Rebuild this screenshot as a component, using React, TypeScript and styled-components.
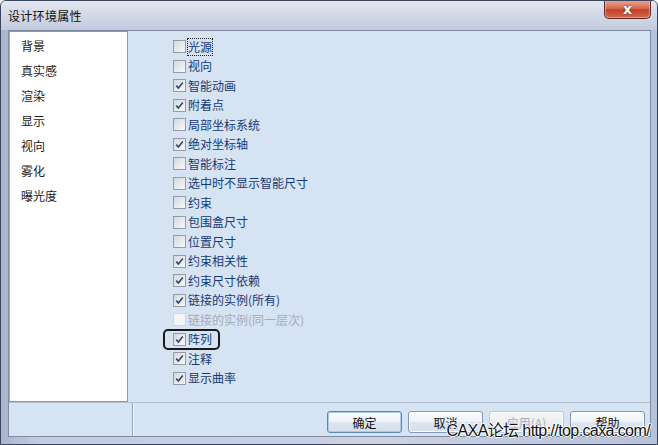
import styled, { createGlobalStyle } from "styled-components";

const GlobalStyle = createGlobalStyle`
  html, body {
    margin: 0;
    padding: 0;
    background: #ffffff;
  }
  body {
    font-family: "Noto Sans CJK SC", "DejaVu Sans", sans-serif;
    font-size: 12px;
  }
`;

const categories = ["背景", "真实感", "渲染", "显示", "视向", "雾化", "曝光度"];

type Option = {
  label: string;
  checked?: boolean;
  disabled?: boolean;
  focused?: boolean;
  marked?: boolean;
};

const options: Option[] = [
  { label: "光源", focused: true },
  { label: "视向" },
  { label: "智能动画", checked: true },
  { label: "附着点", checked: true },
  { label: "局部坐标系统" },
  { label: "绝对坐标轴", checked: true },
  { label: "智能标注" },
  { label: "选中时不显示智能尺寸" },
  { label: "约束" },
  { label: "包围盒尺寸" },
  { label: "位置尺寸" },
  { label: "约束相关性", checked: true },
  { label: "约束尺寸依赖", checked: true },
  { label: "链接的实例(所有)", checked: true },
  { label: "链接的实例(同一层次)", disabled: true },
  { label: "阵列", checked: true, marked: true },
  { label: "注释", checked: true },
  { label: "显示曲率", checked: true },
];

const Window = styled.div`
  position: relative;
  width: 658px;
  height: 445px;
  box-sizing: border-box;
  display: flex;
  flex-direction: column;
  border: 1px solid #3a4660;
  border-radius: 6px 6px 0 0;
  background: linear-gradient(90deg, #aab5cd 0%, #c4cde0 6%, #c9d1e2 60%, #b7c1d8 100%);
  overflow: hidden;
`;

const TitleBar = styled.div`
  height: 29px;
  flex: none;
  display: flex;
  justify-content: space-between;
  align-items: flex-start;
  background: linear-gradient(180deg, #e4e8f0 0%, #d3d9e6 45%, #c3cbdd 100%);
`;

const Title = styled.div`
  padding: 6px 0 0 7px;
  font-size: 12px;
  color: #101010;
  letter-spacing: 0.3px;
`;

const CloseButton = styled.div`
  width: 45px;
  height: 18px;
  margin-right: 6px;
  margin-top: -1px;
  display: flex;
  align-items: center;
  justify-content: center;
  border: 1px solid #5a2a24;
  border-top: none;
  border-radius: 0 0 5px 5px;
  background: linear-gradient(180deg, #e9a996 0%, #d76c52 45%, #c1412a 55%, #cf6a4c 100%);
  box-shadow: inset 0 0 0 1px rgba(255, 220, 200, 0.45);
  color: #ffffff;
  font-family: "DejaVu Sans", sans-serif;
  font-weight: bold;
  font-size: 14px;
  text-shadow: 0 0 2px #6b1d10;
`;

const Client = styled.div`
  flex: 1;
  margin: 0 6px 7px 7px;
  display: flex;
  flex-direction: column;
  border: 1px solid #7f8ca6;
  background: #d6e3f3;
`;

const Main = styled.div`
  height: 371px;
  display: flex;
`;

const CategoryList = styled.ul`
  width: 119px;
  box-sizing: border-box;
  margin: 0;
  padding: 1px 0 0 11px;
  list-style: none;
  background: #ffffff;
  border: 1px solid #8d98aa;
  border-left-color: #a6b0bf;
`;

const Category = styled.li`
  height: 25px;
  line-height: 25px;
  color: #1c1c1c;
  font-size: 12px;
`;

const OptionPane = styled.div`
  flex: 1;
  padding: 6px 0 0 45px;
`;

const Row = styled.div<{ $disabled?: boolean; $marked?: boolean }>`
  position: relative;
  height: 19.5px;
  display: flex;
  align-items: center;
  width: max-content;
  color: ${(p) => (p.$disabled ? "#a3acba" : "#163a72")};
  font-size: 12px;

  &::after {
    content: "";
    display: ${(p) => (p.$marked ? "block" : "none")};
    position: absolute;
    top: -1px;
    bottom: -1px;
    left: -10px;
    right: -8px;
    border: 2px solid #1a1a1a;
    border-radius: 5px;
  }
`;

const Box = styled.span<{ $disabled?: boolean }>`
  width: 11px;
  height: 11px;
  margin-right: 2px;
  flex: none;
  display: flex;
  align-items: center;
  justify-content: center;
  border: 1px solid ${(p) => (p.$disabled ? "#d2d6dc" : "#969ca6")};
  background: ${(p) =>
    p.$disabled
      ? "#f2f4f6"
      : "linear-gradient(135deg, #d3d7dd 0%, #e9ecef 60%, #f8f8f8 100%)"};
`;

const Label = styled.span<{ $focused?: boolean }>`
  outline: ${(p) => (p.$focused ? "1px dotted #222" : "none")};
  line-height: 16px;
`;

const Footer = styled.div`
  flex: 1;
  display: flex;
  border-top: 1px solid #b2bfd1;
`;

const FooterSpacer = styled.div`
  width: 123px;
  border-right: 1px solid #97a4b8;
  box-shadow: 1px 0 0 #f4f7fb;
`;

const ButtonBar = styled.div`
  flex: 1;
  display: flex;
  justify-content: flex-end;
  gap: 6px;
  padding: 8px 5px 0 0;
`;

const Button = styled.div<{ $default?: boolean; $disabled?: boolean }>`
  width: 75px;
  height: 22px;
  box-sizing: border-box;
  display: flex;
  align-items: center;
  justify-content: center;
  border: 1px solid ${(p) => (p.$default ? "#5e86b8" : p.$disabled ? "#c3c9d2" : "#8797b0")};
  border-radius: 3px;
  background: ${(p) =>
    p.$disabled
      ? "linear-gradient(180deg, #f6f7f8 0%, #eceef0 50%, #e2e5e8 100%)"
      : "linear-gradient(180deg, #fbfcfe 0%, #eef2f8 48%, #dde5f0 52%, #d4deec 100%)"};
  box-shadow: ${(p) => (p.$default ? "inset 0 0 0 1px #a9cbed" : "inset 0 0 0 1px #fbfdff")};
  color: ${(p) => (p.$disabled ? "#a7adb6" : "#111")};
  font-size: 12px;
`;

const Watermark = styled.div`
  position: absolute;
  right: 7px;
  bottom: 3px;
  font-family: "Liberation Sans", "Noto Sans CJK SC", sans-serif;
  font-size: 16px;
  letter-spacing: -0.6px;
  color: #111;
  text-shadow: 1px 0 0 #fff, -1px 0 0 #fff, 0 1px 0 #fff, 0 -1px 0 #fff;
  white-space: nowrap;
`;

const CheckMark = () => (
  <svg width="9" height="9" viewBox="0 0 9 9">
    <path d="M1.2 4.6 L3.4 7 L7.8 1.6" fill="none" stroke="#34466f" strokeWidth="1.6" />
  </svg>
);

export default function App() {
  return (
    <>
      <GlobalStyle />
      <Window>
        <TitleBar>
          <Title>设计环境属性</Title>
          <CloseButton>x</CloseButton>
        </TitleBar>
        <Client>
          <Main>
            <CategoryList>
              {categories.map((c) => (
                <Category key={c}>{c}</Category>
              ))}
            </CategoryList>
            <OptionPane>
              {options.map((o) => (
                <Row key={o.label} $disabled={o.disabled} $marked={o.marked}>
                  <Box $disabled={o.disabled}>{o.checked && <CheckMark />}</Box>
                  <Label $focused={o.focused}>{o.label}</Label>
                </Row>
              ))}
            </OptionPane>
          </Main>
          <Footer>
            <FooterSpacer />
            <ButtonBar>
              <Button $default>确定</Button>
              <Button>取消</Button>
              <Button $disabled>应用(A)</Button>
              <Button>帮助</Button>
            </ButtonBar>
          </Footer>
        </Client>
        <Watermark>CAXA论坛 http://top.caxa.com/</Watermark>
      </Window>
    </>
  );
}
